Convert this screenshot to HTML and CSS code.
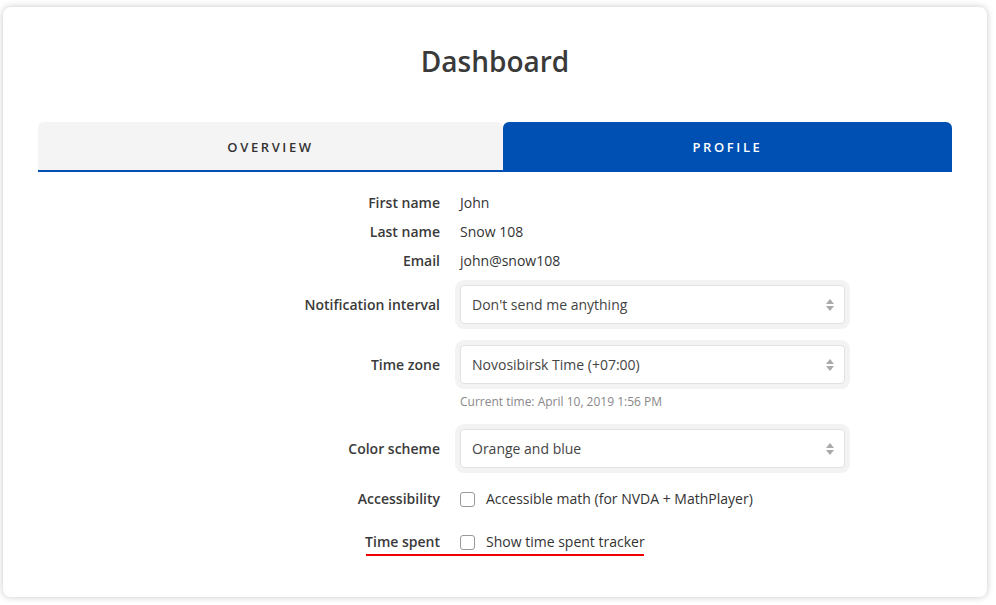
FILE: index.html
```html
<!DOCTYPE html>
<html>
<head>
<meta charset="utf-8">
<link rel="stylesheet" href="styles.css">
</head>
<body>
<div class="card">
  <h1 class="title">Dashboard</h1>
  <div class="tabs">
    <div class="tab">OVERVIEW</div>
    <div class="tab active">PROFILE</div>
  </div>
  <div class="form">
    <div class="row text-row first">
      <div class="label">First name</div>
      <div class="value">John</div>
    </div>
    <div class="row text-row">
      <div class="label">Last name</div>
      <div class="value">Snow 108</div>
    </div>
    <div class="row text-row">
      <div class="label">Email</div>
      <div class="value">john@snow108</div>
    </div>
    <div class="row select-row r-notif">
      <div class="label">Notification interval</div>
      <div class="value">
        <div class="select"><span>Don't send me anything</span><span class="arrows"><i class="up"></i><i class="down"></i></span></div>
      </div>
    </div>
    <div class="row select-row r-tz">
      <div class="label">Time zone</div>
      <div class="value">
        <div class="select"><span>Novosibirsk Time (+07:00)</span><span class="arrows"><i class="up"></i><i class="down"></i></span></div>
      </div>
    </div>
    <div class="row hint-row">
      <div class="label"></div>
      <div class="value hint">Current time: April 10, 2019 1:56 PM</div>
    </div>
    <div class="row select-row r-color">
      <div class="label">Color scheme</div>
      <div class="value">
        <div class="select"><span>Orange and blue</span><span class="arrows"><i class="up"></i><i class="down"></i></span></div>
      </div>
    </div>
    <div class="row check-row r-acc">
      <div class="label">Accessibility</div>
      <div class="value check"><span class="box"></span>Accessible math (for NVDA + MathPlayer)</div>
    </div>
    <div class="row check-row r-time">
      <div class="label">Time spent</div>
      <div class="value check"><span class="box"></span>Show time spent tracker</div>
    </div>
  </div>
</div>
</body>
</html>
```
FILE: styles.css
```css
* { box-sizing: border-box; }
html, body { margin: 0; padding: 0; }
body {
  background: #ffffff;
  font-family: "Open Sans", "Liberation Sans", sans-serif;
  color: #333;
  width: 996px;
  height: 605px;
  overflow: hidden;
}
.card {
  margin: 7px 0 0 3px;
  width: 984px;
  height: 590px;
  background: #fff;
  border-radius: 8px;
  box-shadow: 0 0 7px rgba(0,0,0,0.22);
  padding: 35px 35px 0 35px;
}
.title {
  margin: 0;
  text-align: center;
  font-size: 28px;
  line-height: 38px;
  font-weight: 600;
  color: #3a3a3a;
}
.tabs {
  margin-top: 42px;
  display: flex;
  height: 50px;
}
.tab {
  flex: 0 0 465px;
  background: #f4f4f4;
  border-radius: 6px 6px 0 0;
  border-bottom: 2px solid #0050b3;
  display: flex;
  align-items: center;
  justify-content: center;
  font-size: 13px;
  font-weight: 600;
  letter-spacing: 2.6px;
  color: #333;
  padding-top: 2px;
}
.tab.active {
  flex: 1 1 auto;
  background: #0050b3;
  color: #fff;
  border-bottom: none;
  padding-top: 0;
}
.form {
  display: flex;
  flex-direction: column;
  font-size: 14px;
}
.row {
  display: grid;
  grid-template-columns: 402px 1fr;
  column-gap: 20px;
  align-items: center;
}
.label {
  text-align: right;
  color: #3a3a3a;
  font-weight: 600;
}
.value { color: #333; }
.text-row { height: 29px; line-height: 20px; }
.text-row.first { margin-top: 16px; }
.select-row { height: 49px; }
.r-notif { margin-top: 5px; }
.r-tz { margin-top: 11px; }
.r-color { margin-top: 11px; }
.select {
  width: 385px;
  height: 39px;
  background: #fff;
  border: 1px solid #e2e2e2;
  border-radius: 4px;
  box-shadow: 0 0 0 5px #f3f3f3;
  display: flex;
  align-items: center;
  justify-content: space-between;
  padding: 0 10px 0 11px;
  color: #444;
}
.arrows {
  display: flex;
  flex-direction: column;
  gap: 2px;
}
.arrows i {
  display: block;
  width: 0;
  height: 0;
  border-left: 4px solid transparent;
  border-right: 4px solid transparent;
}
.arrows .up { border-bottom: 5px solid #aaa; }
.arrows .down { border-top: 5px solid #aaa; }
.hint-row { height: 24px; }
.hint {
  font-size: 12px;
  color: #888;
}
.check-row { height: 20px; line-height: 20px; }
.r-acc { margin-top: 16px; }
.r-time { margin-top: 23px; position: relative; }
.check {
  display: flex;
  align-items: center;
}
.box {
  width: 15px;
  height: 15px;
  border: 1px solid #999;
  border-radius: 3px;
  margin-right: 11px;
  background: #fff;
}
.r-time::after {
  content: "";
  position: absolute;
  left: 328px;
  width: 278px;
  top: 22px;
  height: 2px;
  background: #e00;
}
```
